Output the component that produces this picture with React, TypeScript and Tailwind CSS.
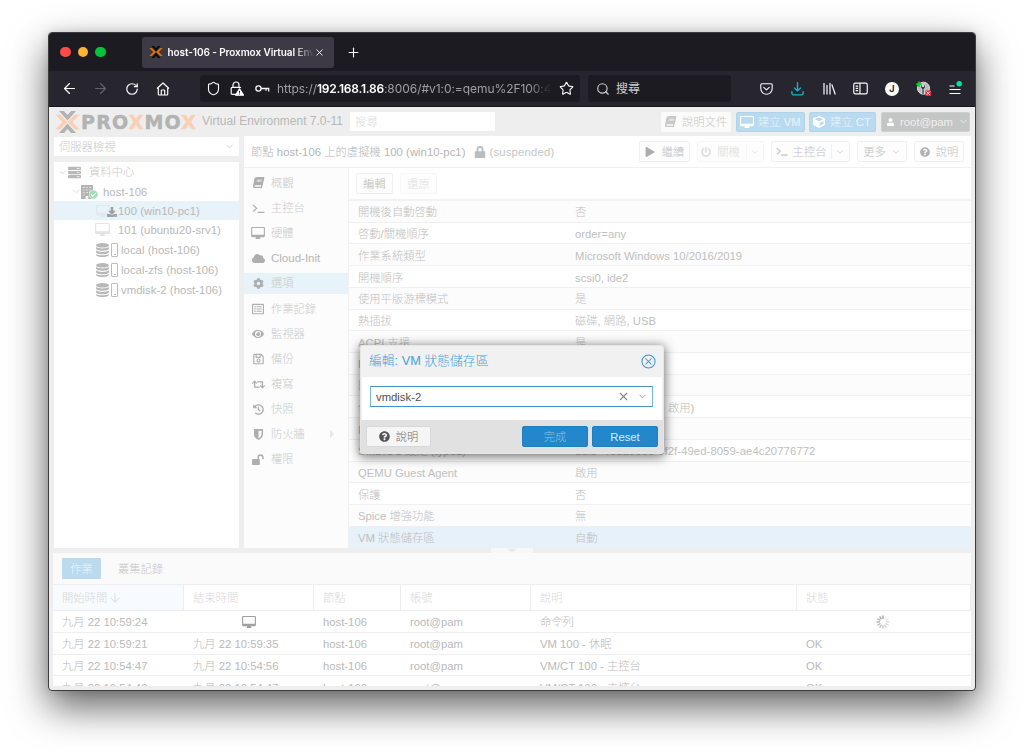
import React from 'react';
import { ArrowLeft, ArrowRight, ArrowDown, ChevronDown, Plus, RotateCw, Search, Shield, Star, X } from 'lucide-react';
import {
  FaBook,
  FaCheckCircle,
  FaCloud,
  FaCog,
  FaCube,
  FaDownload,
  FaEye,
  FaHistory,
  FaLock,
  FaPlay,
  FaPowerOff,
  FaQuestionCircle,
  FaRegListAlt,
  FaRegSave,
  FaRetweet,
  FaServer,
  FaUser,
} from 'react-icons/fa';

type IconProps = { className?: string };

const TerminalIcon: React.FC<IconProps> = ({ className }) => (
  <svg viewBox="0 0 14 12" className={className} fill="none" stroke="currentColor" strokeWidth="1.3">
    <path d="M1 2l4 3.7L1 9.4M6 10.2h7.5" />
  </svg>
);

const MonitorIcon: React.FC<IconProps> = ({ className }) => (
  <svg viewBox="0 0 15 13" className={className} fill="currentColor">
    <path
      fillRule="evenodd"
      d="M1.2 0h12.6C14.5 0 15 .5 15 1.2v8.6c0 .7-.5 1.2-1.2 1.2H9.4l.3 1.2h.5v.8H4.8v-.8h.5L5.6 11H1.2C.5 11 0 10.5 0 9.8V1.2C0 .5.5 0 1.2 0zM1.2 1.1v7.2h12.6V1.1z"
    />
  </svg>
);

const BuildingIcon: React.FC<IconProps> = ({ className }) => (
  <svg viewBox="0 0 12 14" className={className}>
    <rect width="12" height="14" rx=".8" fill="currentColor" />
    <path d="M2.2 2.5h1.4M5.3 2.5h1.4M8.400 2.5h1.4M2.2 5h1.4M5.3 5h1.4M8.400 5h1.4M2.2 7.500h1.4M5.3 7.500h1.4M8.400 7.500h1.4M2.2 10h1.4M8.400 10h1.4" stroke="#fff" strokeWidth="1.1" opacity=".75" />
    <path d="M4.700 11h2.600v3H4.700z" fill="#fff" />
  </svg>
);

const DatabaseIcon: React.FC<IconProps> = ({ className }) => (
  <svg viewBox="0 0 13 14" className={className} fill="currentColor">
    <ellipse cx="6.500" cy="2.300" rx="6.500" ry="2.300" />
    <path d="M0 4.100c2 1.900 11 1.900 13 0v1.400c0 3-13 3-13 0zM0 7.500c2 1.900 11 1.900 13 0v1.400c0 3-13 3-13 0zM0 10.900c2 1.900 11 1.900 13 0v.9c0 3-13 3-13 0z" />
  </svg>
);

const ShieldIcon: React.FC<IconProps> = ({ className }) => (
  <svg viewBox="0 0 10 12" className={className} fill="currentColor">
    <path fillRule="evenodd" d="M.5 0h9c.3 0 .5.2.5.5V6c0 3-2.500 4.800-5 6C2.500 10.800 0 9 0 6V.5C0 .2.2 0 .5 0zM5 1.700v8.400c2-1.100 3.400-2.300 3.400-4.100V1.700z" />
  </svg>
);

const UnlockIcon: React.FC<IconProps> = ({ className }) => (
  <svg viewBox="0 0 13 12" className={className}>
    <rect y="5.500" width="8.500" height="6.500" rx=".8" fill="currentColor" />
    <path d="M6.700 5.800V3.600a2.600 2.600 0 015.200 0v2.200" fill="none" stroke="currentColor" strokeWidth="1.600" />
  </svg>
);

const XMark: React.FC<{ className?: string; dark: string; accent: string }> = ({ className, dark, accent }) => (
  <svg viewBox="0 0 24 22" className={className}>
    <path d="M0 3.5h4.5L12 11l-7.5 7.5H0L7 11zM24 3.5h-4.5L12 11l7.5 7.5H24L17 11z" fill={accent} />
    <path d="M3.5 0h5L12 4l3.5-4h5L12 9.5zM3.5 22h5L12 18l3.5 4h5L12 12.5z" fill={dark} />
  </svg>
);

const HomeIcon: React.FC<IconProps> = ({ className }) => (
  <svg viewBox="0 0 14 14" className={className} fill="none" stroke="currentColor" strokeWidth="1.2" strokeLinejoin="round">
    <path d="M1 6.5L7 1l6 5.5M2.3 6v6.2c0 .5.3.8.8.8h7.8c.5 0 .8-.3.8-.8V6M5.3 13V8.8c0-.5.3-.8.8-.8h1.8c.5 0 .8.3.8.8V13" />
  </svg>
);

const LockWarningIcon: React.FC<IconProps> = ({ className }) => (
  <svg viewBox="0 0 14 15" className={className} fill="none" stroke="currentColor" strokeWidth="1.2">
    <path d="M6 13.4H2.2c-.6 0-1-.4-1-1V7.3c0-.6.4-1 1-1h7.6c.5 0 .8.3.9.7M3 6.3V4a3 3 0 016 0v2.3" />
    <path d="M9.5 7.8l4 6.4h-8z" fill="currentColor" strokeLinejoin="round" />
    <path d="M9.5 9.8v2M9.5 12.6v.8" stroke="#1c1b22" strokeWidth="1" />
  </svg>
);

const KeyIcon: React.FC<IconProps> = ({ className }) => (
  <svg viewBox="0 0 14 8" className={className} fill="none" stroke="currentColor" strokeWidth="1.2">
    <circle cx="3.2" cy="4" r="2.4" />
    <path d="M5.6 4h7.8M10.3 4v2M12.8 4v2.8" />
  </svg>
);

const PocketIcon: React.FC<IconProps> = ({ className }) => (
  <svg viewBox="0 0 13 12" className={className} fill="none" stroke="currentColor" strokeWidth="1.1" strokeLinecap="round" strokeLinejoin="round">
    <path d="M1.8.8h9.4c.6 0 1 .4 1 1v3.7a5.7 5.7 0 01-11.4 0V1.800c0-.6.4-1 1-1z" />
    <path d="M3.800 4.400l2.700 2.500 2.700-2.500" />
  </svg>
);

const DownloadsIcon: React.FC<IconProps> = ({ className }) => (
  <svg viewBox="0 0 13 14" className={className} fill="none" stroke="currentColor" strokeWidth="1.4" strokeLinecap="round">
    <path d="M6.500.8v7.700M3.500 6l3 2.900L9.500 6M.9 9.800v1.500c0 .9.7 1.600 1.600 1.600h8c.9 0 1.600-.7 1.600-1.600V9.800" />
  </svg>
);

const LibraryIcon: React.FC<IconProps> = ({ className }) => (
  <svg viewBox="0 0 13 13" className={className} fill="none" stroke="currentColor" strokeWidth="1.2">
    <path d="M1 1v11.500M4 3v9.500M7 1v11.500M8.800 2.500l3.500 10" />
  </svg>
);

const SidebarIcon: React.FC<IconProps> = ({ className }) => (
  <svg viewBox="0 0 14 12" className={className} fill="none" stroke="currentColor" strokeWidth="1.1">
    <rect x=".7" y="1" width="12.600" height="10" rx="1.500" />
    <path d="M6.500 1v10M2.500 3.700h2.300M2.500 5.800h2.300M2.500 7.900h2.300" />
  </svg>
);

const Spinner: React.FC<IconProps> = ({ className }) => (
  <svg viewBox="-7 -7 14 14" className={className} stroke="#a0a0a0" strokeWidth="1.4" strokeLinecap="round">
    {Array.from({ length: 12 }, (_, i) => (
      <line key={i} x1="0" y1="-3.600" x2="0" y2="-6" transform={`rotate(${-i * 30})`} opacity={1 - i * 0.075} />
    ))}
  </svg>
);

const navItems = [
  { label: '概觀', icon: <FaBook className="w-[11px] h-[11px] -skew-x-12" /> },
  { label: '主控台', icon: <TerminalIcon className="w-[13px] h-[11px]" /> },
  { label: '硬體', icon: <MonitorIcon className="w-3.5 h-3" /> },
  { label: 'Cloud-Init', icon: <FaCloud className="w-[13px] h-[13px]" /> },
  { label: '選項', icon: <FaCog className="w-[11px] h-[11px]" />, active: true },
  { label: '作業記錄', icon: <FaRegListAlt className="w-3 h-3" /> },
  { label: '監視器', icon: <FaEye className="w-3 h-3" /> },
  { label: '備份', icon: <FaRegSave className="w-[11px] h-3" /> },
  { label: '複寫', icon: <FaRetweet className="w-[13px] h-[13px]" /> },
  { label: '快照', icon: <FaHistory className="w-[11px] h-[11px]" /> },
  { label: '防火牆', icon: <ShieldIcon className="w-[9px] h-[11px]" />, more: true },
  { label: '權限', icon: <UnlockIcon className="w-3 h-[11px]" /> },
];

const options = [
  ['開機後自動啓動', '否'],
  ['啓動/關機順序', 'order=any'],
  ['作業系統類型', 'Microsoft Windows 10/2016/2019'],
  ['開機順序', 'scsi0, ide2'],
  ['使用平版游標模式', '是'],
  ['熱插拔', '磁碟, 網路, USB'],
  ['ACPI 支援', '是'],
  ['KVM 硬體虛擬化', '是'],
  ['開機時凍結 CPU', '否'],
  ['使用本地時間', '預設 (Windows 為 啟用)'],
  ['RTC 開始日期', 'now'],
  ['SMBIOS 設定 (type1)', 'uuid=4eda9eee-9f2f-49ed-8059-ae4c20776772'],
  ['QEMU Guest Agent', '啟用'],
  ['保護', '否'],
  ['Spice 增強功能', '無'],
  ['VM 狀態儲存區', '自動'],
];

const tasks = [
  ['九月 22 10:59:24', '', '命令列', ''],
  ['九月 22 10:59:21', '九月 22 10:59:35', 'VM 100 - 休眠', 'OK'],
  ['九月 22 10:54:47', '九月 22 10:54:56', 'VM/CT 100 - 主控台', 'OK'],
  ['九月 22 10:54:40', '九月 22 10:54:47', 'VM/CT 100 - 主控台', 'OK'],
];

const storages = ['local (host-106)', 'local-zfs (host-106)', 'vmdisk-2 (host-106)'];

const taskGrid = 'grid grid-cols-[131px_130px_87px_130px_266px_1fr]';

const BrowserChrome: React.FC = () => (
  <header className="font-['Inter','Noto_Sans_CJK_TC',sans-serif] text-[#fbfbfe]">
    <div className="h-[38px] bg-[#1c1b22] flex items-center">
      <div className="flex gap-[7px] pl-[11px]">
        <span className="w-[10.5px] h-[10.5px] rounded-full bg-[#ff4b47]" />
        <span className="w-[10.5px] h-[10.5px] rounded-full bg-[#fdb334]" />
        <span className="w-[10.5px] h-[10.5px] rounded-full bg-[#05c43b]" />
      </div>
      <div className="ml-[36px] w-[192px] h-[31px] rounded-[3px] bg-[#3d3a45] flex items-center pl-[7px]">
        <XMark className="w-3.5 h-3" dark="#0b0b0d" accent="#e57000" />
        <span className="ml-[5px] w-[146px] overflow-hidden whitespace-nowrap text-[10px] tracking-[-0.080px] font-semibold mask-r-from-86% mask-r-to-100%">
          host-106 - Proxmox Virtual Environment
        </span>
        <X className="w-[11px] h-[11px]" strokeWidth={2} />
      </div>
      <Plus className="ml-3 w-[15px] h-[15px]" strokeWidth={1.8} />
    </div>
    <div className="h-[36px] bg-[#27262e] border-b border-[#17161c] flex items-center">
      <div className="flex items-center w-[151px] pl-[12px]">
        <ArrowLeft className="w-[17px] h-[17px]" strokeWidth={1.7} />
        <ArrowRight className="ml-[14px] w-[17px] h-[17px] text-[#64636b]" strokeWidth={1.7} />
        <RotateCw className="ml-[16px] w-[14px] h-[14px]" strokeWidth={2.1} />
        <HomeIcon className="ml-[17px] w-[14px] h-[14px]" />
      </div>
      <div className="w-[380px] h-[27px] rounded-[3px] bg-[#1c1b22] flex items-center pl-[6px] pr-[6px]">
        <Shield className="w-[15px] h-[15px]" strokeWidth={1.8} />
        <LockWarningIcon className="ml-[9px] w-[14px] h-[15px]" />
        <KeyIcon className="ml-[11px] w-[15px] h-[9px]" />
        <span className="ml-[7px] w-[274px] overflow-hidden whitespace-nowrap text-[12px] tracking-[-0.050px] text-[#a09fa7] mask-r-from-92% mask-r-to-100%">
          https://<b className="font-semibold text-white tracking-[-0.250px]">192.168.1.86</b>:8006/#v1:0:=qemu%2F100:4
        </span>
        <Star className="ml-auto w-[15px] h-[15px]" strokeWidth={1.8} />
      </div>
      <div className="ml-[8px] w-[143px] h-[27px] rounded-[3px] bg-[#1c1b22] flex items-center pl-[8px] text-[12px] text-[#cfcfd4]">
        <Search className="w-[14px] h-[14px] mr-[6px]" strokeWidth={2} />
        搜尋
      </div>
      <div className="ml-[29px] flex items-center">
        <PocketIcon className="w-[13px] h-3" />
        <DownloadsIcon className="ml-[18px] w-[13px] h-3.5 text-[#1ab1cb]" />
        <LibraryIcon className="ml-[19px] w-[13px] h-[13px]" />
        <SidebarIcon className="ml-[17px] w-[15px] h-[13px]" />
        <span className="ml-[17px] w-[14px] h-[14px] rounded-full bg-white text-[#27262e] text-[9px] font-bold flex items-center justify-center">
          J
        </span>
        <svg viewBox="0 0 15 15" className="ml-[17px] w-[15px] h-[15px]">
          <circle cx="7.5" cy="7.2" r="6" fill="#b9b9bb" stroke="#e8e8e8" strokeWidth="1" />
          <path d="M6 13V8C4 7 4 4 6 2.500v3h2v-3c2 1.500 2 4.500 0 5.500v5" fill="#3c3c40" stroke="#fff" strokeWidth=".6" />
          <path d="M3 .5v5.500M.2 3.200h5.600" stroke="#0ccf30" strokeWidth="1.700" />
          <rect x="9.500" y="9.500" width="5.500" height="5.500" fill="#e22b3f" />
          <path d="M10.500 10.500l3.500 3.500M14 10.500L10.500 14" stroke="#fff" strokeWidth=".9" />
        </svg>
        <svg viewBox="0 0 14 14" className="ml-[17px] mb-[2px] w-[14px] h-[14px]">
          <path d="M1.500 5h5M1.500 8.500h11M1.500 12.500h11" stroke="#fbfbfe" strokeWidth="1.200" />
          <circle cx="11.200" cy="2.800" r="2.700" fill="#00e5a0" />
        </svg>
      </div>
    </div>
  </header>
);

const TopBar: React.FC = () => (
  <div className="h-[29px] flex items-center pl-[6px] pr-[5px]">
    <XMark className="w-[25px] h-[22px]" dark="#b3b3b3" accent="#fbcfb4" />
    <div className="w-[121px] pl-[1px] font-['DejaVu_Sans'] font-bold text-[19px] leading-[22px] tracking-[1.2px] text-[#b3b3b3] whitespace-nowrap [-webkit-text-stroke:0.5px_currentColor]">
      PRO<span className="text-[#fbcfb4]">X</span>MO<span className="text-[#fbcfb4]">X</span>
    </div>
    <span className="w-[149px] pl-[1px] pb-[2px] text-[12px] text-[#b8b8b8] whitespace-nowrap">Virtual Environment 7.0-11</span>
    <div className="w-[145px] h-[19px] bg-white pl-[5px] flex items-center text-[#dcdcdc]">搜尋</div>
    <div className="ml-auto flex h-[20px]">
      <button className="w-[70px] mr-[5px] bg-[#fbfbfb] rounded-[2px] flex items-center pl-[4px] gap-[6px] text-[#c8c8c8]">
        <FaBook className="w-[11px] h-[11px] -skew-x-12" />
        說明文件
      </button>
      <button className="w-[69px] mr-[4px] bg-[#badaef] border border-[#afd3ea] rounded-[2px] flex items-center pl-[3px] gap-[4px] text-[#eaf4fb] whitespace-nowrap">
        <MonitorIcon className="w-[14px] h-3 text-white" />
        建立 VM
      </button>
      <button className="w-[67px] mr-[5px] bg-[#badaef] border border-[#afd3ea] rounded-[2px] flex items-center pl-[3px] gap-[5px] text-[#eaf4fb] whitespace-nowrap">
        <FaCube className="w-3 h-3 text-white" />
        建立 CT
      </button>
      <button className="w-[89px] bg-[#c4c5c5] border border-[#cecfcf] rounded-[2px] flex items-center pl-[5px] gap-[6px] text-[#f0f0f0]">
        <FaUser className="w-[9px] h-[10px] text-white" />
        root@pam
        <ChevronDown className="-ml-[1px] w-[11px] h-[11px] shrink-0" strokeWidth={2} />
      </button>
    </div>
  </div>
);

const ResourceTree: React.FC = () => (
  <aside className="w-[185px] flex flex-col shrink-0">
    <div className="mt-[1px] h-[19px] bg-white flex items-center justify-between pl-[5px] pr-[4px] text-[#c8c8c8]">
      伺服器檢視
      <ChevronDown className="w-[11px] h-[11px]" strokeWidth={1.8} />
    </div>
    <div className="mt-[6px] h-[386px] bg-white text-[#b8b8b8] tracking-[0.060px]">
      <div className="h-[20px] flex items-center pl-[3px]">
        <ChevronDown className="w-[11px] h-[11px] text-[#cfcfcf]" strokeWidth={1.6} />
        <FaServer className="-ml-px w-[15px] h-[13px] text-[#b8b8b8]" />
        <span className="ml-[7px] text-[#cacaca]">資料中心</span>
      </div>
      <div className="h-[19px] flex items-center pl-[17px]">
        <ChevronDown className="w-[11px] h-[11px] text-[#cfcfcf]" strokeWidth={1.6} />
        <div className="relative -ml-px w-[12px] h-[14px] text-[#b4b4b4]">
          <BuildingIcon className="w-[12px] h-[14px]" />
          <FaCheckCircle className="absolute left-[8px] top-[5px] w-[9px] h-[9px] text-[#a0dfb2] bg-white rounded-full" />
        </div>
        <span className="ml-[10px]">host-106</span>
      </div>
      <div className="h-[19px] bg-[#e7f2f9] flex items-center pl-[42px]">
        <MonitorIcon className="w-[14px] h-3 text-[#dde8ef]" />
        <FaDownload className="-ml-[3px] mt-[2px] w-[10px] h-[10px] text-[#a0a0a0]" />
        <span className="ml-[1px]">100 (win10-pc1)</span>
      </div>
      <div className="h-[19px] flex items-center pl-[41px]">
        <MonitorIcon className="w-[15px] h-[13px] text-[#e4e4e4]" />
        <span className="ml-[8px]">101 (ubuntu20-srv1)</span>
      </div>
      {storages.map((name) => (
        <div key={name} className="h-[20px] flex items-center pl-[42px] pt-px">
          <DatabaseIcon className="w-[13px] h-[14px] text-[#b8b8b8]" />
          <div className="ml-[2px] w-[7px] h-[14px] rounded-[1px] border border-[#bdbdbd] flex items-end justify-center pb-[1px]">
            <span className="w-[2px] h-px bg-[#b5b5b5]" />
          </div>
          <span className="ml-[3px]">{name}</span>
        </div>
      ))}
    </div>
  </aside>
);

const toolButton = 'h-[21px] border rounded-[2px] bg-[#fdfdfd] flex items-center justify-center whitespace-nowrap';

const GuestPanel: React.FC = () => (
  <main className="ml-[5px] w-[727px] h-[412px] bg-white flex flex-col">
    <div className="h-[32px] border-b border-[#f0f0f0] flex items-center pl-[7px] pr-[7px] text-[#b5b5b5]">
      <span className="tracking-[0.030px]">節點 host-106 上的虛擬機 100 (win10-pc1)</span>
      <FaLock className="ml-[9px] w-[12px] h-[12px] text-[#b9bdc0]" />
      <span className="ml-[3px] tracking-[0.200px] text-[#c3c6c8]">(suspended)</span>
      <div className="ml-auto flex gap-[7px] text-[#c2c2c2]">
        <button className={`${toolButton} w-[51px] gap-[7px] border-[#f0f0f0]`}>
          <FaPlay className="w-[10px] h-[10px] text-[#adadad]" />
          繼續
        </button>
        <button className={`${toolButton} w-[67px] gap-[6px] border-[#f6f6f6] text-[#dcdcdc]`}>
          <FaPowerOff className="w-[10px] h-[10px]" />
          關機
          <span className="w-px h-[15px] bg-[#f5f5f5]" />
          <ChevronDown className="-ml-[3px] w-[10px] h-[10px]" strokeWidth={1.8} />
        </button>
        <button className={`${toolButton} w-[79px] gap-[5px] border-[#f0f0f0]`}>
          <TerminalIcon className="w-[12px] h-[11px]" />
          主控台
          <span className="w-px h-[15px] bg-[#f0f0f0]" />
          <ChevronDown className="-ml-[2px] w-[10px] h-[10px]" strokeWidth={1.8} />
        </button>
        <button className={`${toolButton} w-[50px] gap-[5px] border-[#f0f0f0]`}>
          更多
          <ChevronDown className="w-[10px] h-[10px]" strokeWidth={1.8} />
        </button>
        <button className={`${toolButton} w-[50px] gap-[6px] border-[#f0f0f0]`}>
          <FaQuestionCircle className="w-[10px] h-[10px] text-[#b0b0b0]" />
          說明
        </button>
      </div>
    </div>
    <div className="flex h-[380px]">
      <nav className="w-[104px] shrink-0 bg-[#fcfcfc] pt-[4.4px]">
        {navItems.map((item) => (
          <div
            key={item.label}
            className={`h-[21px] mb-[4.15px] flex items-center pl-[7px] pr-[14px] text-[#cacaca] ${item.active ? 'bg-[#e7f2f9]' : ''}`}
          >
            <span className="w-[14px] mr-[6px] flex justify-center text-[#aeaeae]">{item.icon}</span>
            <span className={item.label === 'Cloud-Init' ? 'text-[11.5px] text-[#b5b5b5]' : ''}>{item.label}</span>
            {item.more && (
              <span className="ml-auto border-y-[4px] border-y-transparent border-l-[4px] border-l-[#e6e6e6]" />
            )}
          </div>
        ))}
      </nav>
      <section className="flex-1 border-l border-[#f0f0f0] overflow-hidden">
        <div className="h-[33px] border-b-2 border-[#f2f2f2] flex items-center gap-[7px] pl-[7px]">
          <button className={`${toolButton} w-[37px] border-[#f0f0f0] text-[#bababa]`}>編輯</button>
          <button className={`${toolButton} w-[37px] border-[#f6f6f6] text-[#e0e0e0]`}>還原</button>
        </div>
        {options.map(([label, value], i) => (
          <div
            key={label}
            className={`h-[21.73px] pt-[2px] border-b flex items-center pl-[9px] text-[#c0c0c0] ${
              i === options.length - 1
                ? 'bg-[#e6f1f9] border-[#e6f1f9]'
                : i % 2 === 0
                  ? 'bg-[#fcfcfc] border-[#f0f0f0]'
                  : 'bg-white border-[#f0f0f0]'
            }`}
          >
            <span className="w-[217px]">{label}</span>
            <span className={value.startsWith('uuid') ? 'tracking-[0.080px]' : ''}>{value}</span>
          </div>
        ))}
      </section>
    </div>
  </main>
);

const TaskLog: React.FC = () => (
  <section className="ml-[4px] w-[918px] h-[133px] bg-white overflow-hidden flex flex-col">
    <div className="h-[31px] shrink-0 bg-[#fafafa] flex items-center pl-[9px]">
      <button className="w-[39px] h-[21px] bg-[#bbdaee] text-[#e9f4fb]">作業</button>
      <button className="ml-[17px] text-[#c6c6c6]">叢集記錄</button>
    </div>
    <div className={`${taskGrid} h-[27px] shrink-0 border-y border-[#eeeeee] text-[#d8d8d8]`}>
      <div className="flex items-center pl-[9px] bg-[#f7fbff] border-r border-[#ededed]">
        開始時間
        <ArrowDown className="ml-[1px] w-[14px] h-[14px]" strokeWidth={1.6} />
      </div>
      {['結束時間', '節點', '帳號', '說明', '狀態'].map((title) => (
        <div key={title} className="flex items-center pl-[9px] border-r border-[#ededed]">
          {title}
        </div>
      ))}
    </div>
    {tasks.map(([start, end, description, status]) => (
      <div key={start} className={`${taskGrid} h-[21.8px] pt-[2px] shrink-0 border-b border-[#f0f0f0] items-center text-[#bababa]`}>
        <span className="pl-[9px]">{start}</span>
        {end ? <span className="pl-[9px]">{end}</span> : <MonitorIcon className="ml-[58px] w-[14px] h-[12px] text-[#a0a0a0]" />}
        <span className="pl-[9px]">host-106</span>
        <span className="pl-[9px]">root@pam</span>
        <span className="pl-[9px]">{description}</span>
        {status ? <span className="pl-[9px]">{status}</span> : <Spinner className="ml-[79px] w-[14px] h-[14px]" />}
      </div>
    ))}
  </section>
);

const EditDialog: React.FC = () => (
  <div
    role="dialog"
    className="absolute left-[311px] top-[312px] w-[304px] h-[109px] rounded-[3px] bg-[#f1f1f1] border border-[#e6e6e6] flex flex-col overflow-hidden shadow-[0_2px_11px_1px_rgba(0,0,0,0.55)]"
  >
    <div className="h-[31px] shrink-0 flex items-center justify-between pl-[8px] pr-[7px] text-[12.8px] text-[#4a9fd6]">
      <span className="pb-[2px]">編輯: VM 狀態儲存區</span>
      <svg viewBox="0 0 16 16" className="w-[15px] h-[15px]" fill="none" stroke="#3c94cf" strokeWidth="1.1">
        <circle cx="8" cy="8" r="7" />
        <path d="M4.8 4.8l6.400 6.400M11.200 4.800l-6.400 6.400" />
      </svg>
    </div>
    <div className="mx-[1px] h-[43px] shrink-0 bg-white pt-[9px] pl-[8px] pr-[9px]">
      <div className="h-[21px] border border-y-[#3f94cd] border-x-[#7ab8e0] flex items-center pl-[5px] pr-[4px] text-[#505050]">
        vmdisk-2
        <X className="ml-auto w-[13px] h-[13px] text-[#888]" strokeWidth={2} />
        <ChevronDown className="ml-[7px] w-[11px] h-[11px] text-[#888]" strokeWidth={1.8} />
      </div>
    </div>
    <div className="flex-1 bg-[#e1e1e1] flex items-center pl-[5px] pr-[5px]">
      <button className="w-[65px] h-[21px] rounded-[2px] bg-[#f5f5f5] border border-[#d8d8d8] flex items-center justify-center gap-[6px] text-[#707070]">
        <FaQuestionCircle className="w-[11px] h-[11px] text-[#555]" />
        說明
      </button>
      <button className="ml-auto w-[66px] h-[21px] rounded-[2px] bg-[#2287cb] border border-[#1c7fc1] text-[#8fc5ea]">完成</button>
      <button className="ml-[4px] w-[66px] h-[21px] rounded-[2px] bg-[#2287cb] border border-[#1c7fc1] text-[#d8ebf8]">Reset</button>
    </div>
  </div>
);

const App: React.FC = () => {
  return (
    <div className="w-[1024px] h-[755px] bg-white overflow-hidden pl-[48px] pt-[32px]">
      <div className="relative w-[928px] h-[659px] rounded-[4px] border border-[#3c3c3e] bg-[#eeeeee] overflow-hidden shadow-[0_16px_38px_rgba(0,0,0,0.62),0_0_10px_rgba(0,0,0,0.12)]">
        <BrowserChrome />
        <div className="font-['Liberation_Sans','Noto_Sans_CJK_TC',sans-serif] font-light text-[11.3px] leading-[16px]">
          <TopBar />
          <div className="pl-[5px] h-[412px] flex">
            <ResourceTree />
            <GuestPanel />
          </div>
          {/* Splitter between content and task log */}
          <div className="h-[5px] flex">
            <div className="ml-[442px] w-[42px] h-[5px] bg-[#f7f7f7] flex justify-center">
              <span className="mt-px h-0 border-x-[4px] border-x-transparent border-t-[3px] border-t-[#e6e6e6]" />
            </div>
          </div>
          <TaskLog />
          <EditDialog />
        </div>
      </div>
    </div>
  );
};

export default App;
